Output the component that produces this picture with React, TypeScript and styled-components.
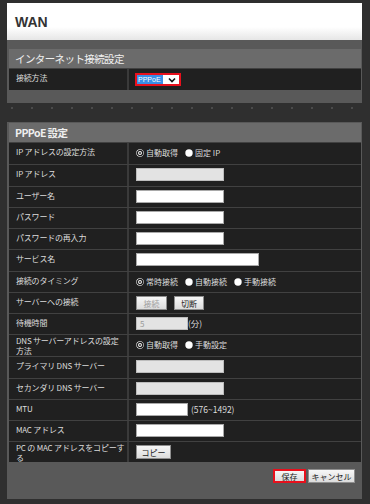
import React from 'react';
import styled, { createGlobalStyle } from 'styled-components';

const Global = createGlobalStyle`
  html, body { margin: 0; padding: 0; }
  body {
    width: 370px; height: 504px; overflow: hidden;
    background: #2f2f2f;
    font-family: "Noto Sans CJK JP", "Noto Sans", sans-serif;
  }
  * { box-sizing: border-box; }
`;

const Page = styled.div`
  width: 370px;
  height: 504px;
  padding: 3px 8px 0 7px;
  background-color: #2f2f2f;
  background-image: radial-gradient(circle, #545454 0.6px, transparent 1px);
  background-size: 20px 20px;
  background-position: 2px -2px;
  display: flex;
  flex-direction: column;
`;

const TitleBar = styled.div`
  height: 37px;
  background: linear-gradient(#ffffff 65%, #e6e6e6);
  padding-left: 8px;
  display: flex;
  align-items: center;
  font: bold 14px "Liberation Sans", Arial, sans-serif;
  color: #333;
`;

const Panel = styled.div<{ $pt: number; $pb: number; $mt?: number }>`
  background: #595959;
  padding: ${p => p.$pt}px 1px ${p => p.$pb}px 2px;
  margin-top: ${p => p.$mt ?? 0}px;
  display: flex;
  flex-direction: column;
`;

const SectionHeader = styled.div<{ $bold?: boolean }>`
  height: 19px;
  background: #6b6b6b;
  color: #efefef;
  padding-left: 6px;
  display: flex;
  align-items: center;
  font-size: 10.5px;
  letter-spacing: -0.6px;
  font-weight: ${p => (p.$bold ? 700 : 400)};
`;

const Row = styled.div<{ $h: number }>`
  display: grid;
  grid-template-columns: 120px 1fr;
  height: ${p => p.$h + 1}px;
  border-top: 1px solid #414141;
  background: #202020;
`;

const Label = styled.div<{ $two?: boolean }>`
  border-right: 2px solid #3a3a3a;
  padding: ${p => (p.$two ? 1 : 4)}px 0 0 7px;
  color: #dcdcdc;
  font-size: 8px;
  line-height: ${p => (p.$two ? 10 : 9)}px;
  letter-spacing: -0.2px;
  white-space: nowrap;
  overflow: hidden;
`;

const Value = styled.div`
  display: flex;
  align-items: flex-start;
  padding: 3px 0 0 7px;
  color: #dcdcdc;
  font-size: 8px;
`;

const TextInput = styled.div<{ $w: number; $disabled?: boolean }>`
  width: ${p => p.$w}px;
  height: 13px;
  background: ${p => (p.$disabled ? '#e3e3e3' : '#ffffff')};
  border: 1px solid ${p => (p.$disabled ? '#bdbdbd' : '#a9a9a9')};
  color: #9a9a9a;
  font-size: 8px;
  line-height: 11px;
  padding-left: 3px;
`;

const Suffix = styled.span<{ $ml: number }>`
  margin-left: ${p => p.$ml}px;
  line-height: 13px;
  font-size: 8.5px;
  color: #dcdcdc;
`;

const RadioGroup = styled.div`
  display: flex;
  align-items: center;
  height: 13px;
  gap: 7px;
`;

const RadioItem = styled.label`
  display: flex;
  align-items: center;
  gap: 2px;
  font-size: 8px;
  color: #dcdcdc;
  white-space: nowrap;
`;

const ButtonRow = styled.div<{ $gap: number }>`
  display: flex;
  gap: ${p => p.$gap}px;
`;

const Btn = styled.div<{ $w: number; $disabled?: boolean; $highlight?: boolean }>`
  width: ${p => p.$w}px;
  height: 14px;
  display: flex;
  align-items: center;
  justify-content: center;
  font-size: 8px;
  color: ${p => (p.$disabled ? '#a0a0a0' : '#222')};
  background: linear-gradient(#f7f7f7, #dcdcdc);
  border: ${p => (p.$highlight ? '2px solid #e8101c' : '1px solid #8f8f8f')};
`;

const Footer = styled.div`
  display: flex;
  justify-content: flex-end;
  padding: 7px 6px 0 0;
`;

const SelectBox = styled.div`
  margin-top: 1px;
  margin-left: -1px;
  width: 46px;
  height: 13px;
  border: 2px solid #e8101c;
  display: flex;
  background: #fff;
`;

const SelectValue = styled.div`
  width: 26px;
  background: #3a8ee6;
  color: #fff;
  font: 7px "Liberation Sans", Arial, sans-serif;
  display: flex;
  align-items: center;
  padding-left: 1px;
  margin: 0 1px 0 0;
`;

const SelectArrow = styled.div`
  flex: 1;
  display: flex;
  align-items: center;
  justify-content: center;
  background: #fff;
`;

function Radio({ checked }: { checked?: boolean }) {
  return (
    <svg width="8" height="8" viewBox="0 0 8 8">
      <circle cx="4" cy="4" r="3.7" fill="#ffffff" />
      {checked && <circle cx="4" cy="4" r="2.6" fill="none" stroke="#1a1a1a" strokeWidth="1.3" />}
      {checked && <circle cx="4" cy="4" r="0.9" fill="#1a1a1a" />}
    </svg>
  );
}

function Chevron() {
  return (
    <svg width="8" height="6" viewBox="0 0 8 6">
      <path d="M1 1.5 L4 4.5 L7 1.5" fill="none" stroke="#111" strokeWidth="1.6" />
    </svg>
  );
}

type Opt = { label: string; checked?: boolean };

function Radios({ opts }: { opts: Opt[] }) {
  return (
    <RadioGroup>
      {opts.map(o => (
        <RadioItem key={o.label}>
          <Radio checked={o.checked} />
          {o.label}
        </RadioItem>
      ))}
    </RadioGroup>
  );
}

export default function App() {
  return (
    <>
      <Global />
      <Page>
        <TitleBar>WAN</TitleBar>
        <Panel $pt={9} $pb={13}>
          <SectionHeader>インターネット接続設定</SectionHeader>
          <Row $h={21}>
            <Label>接続方法</Label>
            <Value>
              <SelectBox>
                <SelectValue>PPPoE</SelectValue>
                <SelectArrow>
                  <Chevron />
                </SelectArrow>
              </SelectBox>
            </Value>
          </Row>
        </Panel>
        <Panel $pt={1} $pb={16} $mt={19}>
          <SectionHeader $bold>PPPoE 設定</SectionHeader>
          <Row $h={21}>
            <Label>IP アドレスの設定方法</Label>
            <Value>
              <Radios opts={[{ label: '自動取得', checked: true }, { label: '固定 IP' }]} />
            </Value>
          </Row>
          <Row $h={21}>
            <Label>IP アドレス</Label>
            <Value>
              <TextInput $w={88} $disabled />
            </Value>
          </Row>
          <Row $h={20}>
            <Label>ユーザー名</Label>
            <Value>
              <TextInput $w={88} />
            </Value>
          </Row>
          <Row $h={20}>
            <Label>パスワード</Label>
            <Value>
              <TextInput $w={88} />
            </Value>
          </Row>
          <Row $h={20}>
            <Label>パスワードの再入力</Label>
            <Value>
              <TextInput $w={88} />
            </Value>
          </Row>
          <Row $h={21}>
            <Label>サービス名</Label>
            <Value>
              <TextInput $w={123} />
            </Value>
          </Row>
          <Row $h={20}>
            <Label>接続のタイミング</Label>
            <Value>
              <Radios
                opts={[
                  { label: '常時接続', checked: true },
                  { label: '自動接続' },
                  { label: '手動接続' },
                ]}
              />
            </Value>
          </Row>
          <Row $h={20}>
            <Label>サーバーへの接続</Label>
            <Value>
              <ButtonRow $gap={7}>
                <Btn $w={31} $disabled>接続</Btn>
                <Btn $w={30}>切断</Btn>
              </ButtonRow>
            </Value>
          </Row>
          <Row $h={20}>
            <Label>待機時間</Label>
            <Value>
              <TextInput $w={52} $disabled>5</TextInput>
              <Suffix $ml={0}>(分)</Suffix>
            </Value>
          </Row>
          <Row $h={21}>
            <Label $two>
              DNS サーバーアドレスの設定
              <br />
              方法
            </Label>
            <Value>
              <Radios opts={[{ label: '自動取得', checked: true }, { label: '手動設定' }]} />
            </Value>
          </Row>
          <Row $h={21}>
            <Label>プライマリ DNS サーバー</Label>
            <Value>
              <TextInput $w={88} $disabled />
            </Value>
          </Row>
          <Row $h={20}>
            <Label>セカンダリ DNS サーバー</Label>
            <Value>
              <TextInput $w={88} $disabled />
            </Value>
          </Row>
          <Row $h={20}>
            <Label>MTU</Label>
            <Value>
              <TextInput $w={52} />
              <Suffix $ml={3}>(576~1492)</Suffix>
            </Value>
          </Row>
          <Row $h={20}>
            <Label>MAC アドレス</Label>
            <Value>
              <TextInput $w={88} />
            </Value>
          </Row>
          <Row $h={20}>
            <Label $two>
              PC の MAC アドレスをコピーす
              <br />る
            </Label>
            <Value>
              <Btn $w={35}>コピー</Btn>
            </Value>
          </Row>
          <Footer>
            <ButtonRow $gap={2}>
              <Btn $w={33} $highlight>保存</Btn>
              <Btn $w={47}>キャンセル</Btn>
            </ButtonRow>
          </Footer>
        </Panel>
      </Page>
    </>
  );
}
